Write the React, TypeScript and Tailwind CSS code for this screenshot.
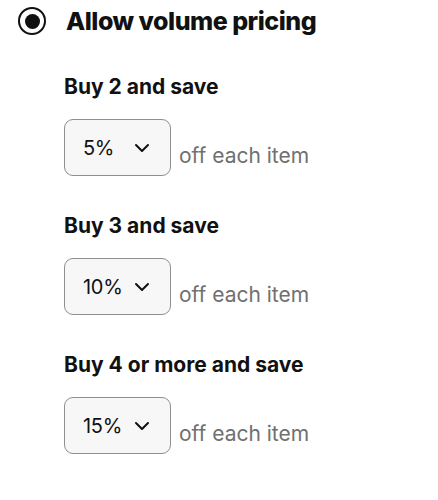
import React from "react";

function Chevron() {
  return (
    <svg width="16" height="10" viewBox="0 0 16 10" fill="none">
      <path d="M2 2l6 6 6-6" stroke="#111" strokeWidth="2" strokeLinecap="round" strokeLinejoin="round" />
    </svg>
  );
}

function Tier({ label, value }: { label: string; value: string }) {
  return (
    <div className="flex flex-col">
      <div className="text-[21px] font-bold text-[#111] leading-[28px]">{label}</div>
      <div className="flex items-end mt-[18px]">
        <div className="w-[107px] h-[57px] rounded-[9px] border border-[#8f8f8f] bg-[#f7f7f7] flex items-center pl-[18px] pr-[20px] justify-between">
          <span className="text-[20px] text-[#111] tracking-[-0.3px]">{value}</span>
          <Chevron />
        </div>
        <span className="ml-[8px] mb-[8px] text-[21px] text-[#707070] leading-[24px]">off each item</span>
      </div>
    </div>
  );
}

export default function App() {
  return (
    <div className="w-[438px] h-[500px] bg-white" style={{ fontFamily: "Inter, 'Liberation Sans', sans-serif" }}>
      <div className="flex items-center pt-[6px] pl-[18px]">
        <div className="w-[28px] h-[28px] rounded-full border-2 border-[#111] flex items-center justify-center">
          <div className="w-[15px] h-[15px] rounded-full bg-[#111]" />
        </div>
        <div className="ml-[20px] text-[25px] font-extrabold text-[#111] leading-[30px] tracking-[-0.5px]">Allow volume pricing</div>
      </div>
      <div className="pl-[64px] pt-[37px] flex flex-col gap-[36px]">
        <Tier label="Buy 2 and save" value="5%" />
        <Tier label="Buy 3 and save" value="10%" />
        <Tier label="Buy 4 or more and save" value="15%" />
      </div>
    </div>
  );
}
